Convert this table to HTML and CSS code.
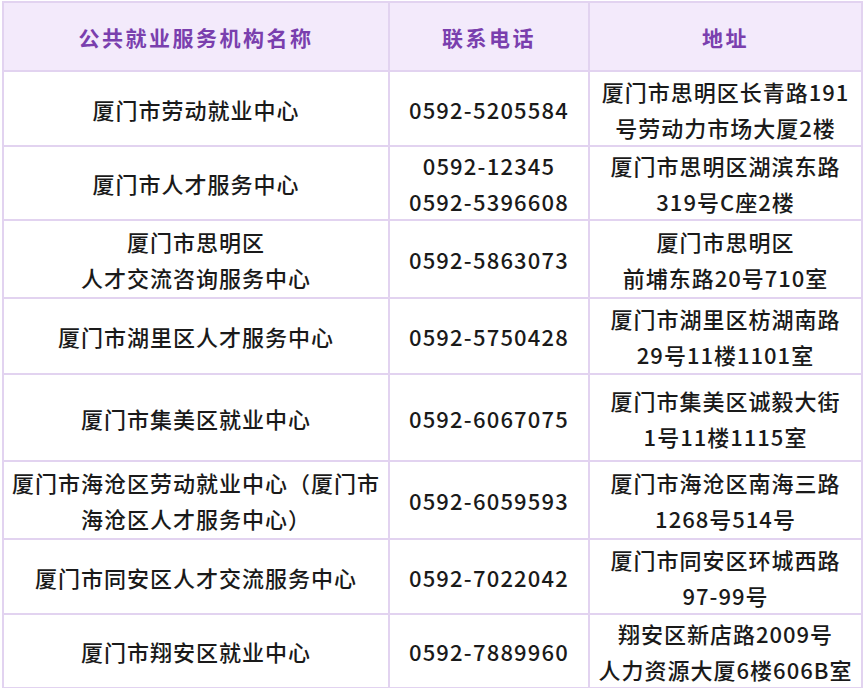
FILE: index.html
```html
<!DOCTYPE html>
<html lang="zh-CN">
<head>
<meta charset="utf-8">
<link rel="stylesheet" href="styles.css">
<title>厦门市公共就业服务机构</title>
</head>
<body>
<table class="svc">
  <colgroup>
    <col class="c-name">
    <col class="c-tel">
    <col class="c-addr">
  </colgroup>
  <thead>
    <tr class="r-head">
      <th>公共就业服务机构名称</th>
      <th>联系电话</th>
      <th>地址</th>
    </tr>
  </thead>
  <tbody>
    <tr class="r1">
      <td>厦门市劳动就业中心</td>
      <td>0592-5205584</td>
      <td>厦门市思明区长青路191<br>号劳动力市场大厦2楼</td>
    </tr>
    <tr class="r2">
      <td>厦门市人才服务中心</td>
      <td>0592-12345<br>0592-5396608</td>
      <td>厦门市思明区湖滨东路<br>319号C座2楼</td>
    </tr>
    <tr class="r3">
      <td>厦门市思明区<br>人才交流咨询服务中心</td>
      <td>0592-5863073</td>
      <td>厦门市思明区<br>前埔东路20号710室</td>
    </tr>
    <tr class="r4">
      <td>厦门市湖里区人才服务中心</td>
      <td>0592-5750428</td>
      <td>厦门市湖里区枋湖南路<br>29号11楼1101室</td>
    </tr>
    <tr class="r5">
      <td>厦门市集美区就业中心</td>
      <td>0592-6067075</td>
      <td>厦门市集美区诚毅大街<br>1号11楼1115室</td>
    </tr>
    <tr class="r6">
      <td>厦门市海沧区劳动就业中心（厦门市<br>海沧区人才服务中心）</td>
      <td>0592-6059593</td>
      <td>厦门市海沧区南海三路<br>1268号514号</td>
    </tr>
    <tr class="r7">
      <td>厦门市同安区人才交流服务中心</td>
      <td>0592-7022042</td>
      <td>厦门市同安区环城西路<br>97-99号</td>
    </tr>
    <tr class="r8">
      <td>厦门市翔安区就业中心</td>
      <td>0592-7889960</td>
      <td>翔安区新店路2009号<br>人力资源大厦6楼606B室</td>
    </tr>
  </tbody>
</table>
</body>
</html>
```

FILE: styles.css
```css
html, body {
  margin: 0;
  padding: 0;
  background: #ffffff;
}

body {
  padding: 1px 0 0 2px;
  font-family: "Noto Sans CJK SC", "Noto Sans", sans-serif;
  color: #1a1a1a;
}

.svc {
  border-collapse: collapse;
  table-layout: fixed;
  width: 859px;
  border: 2px solid #e2d3f0;
}

.c-name { width: 386px; }
.c-tel { width: 200px; }
.c-addr { width: 273px; }

.svc th,
.svc td {
  border: 2px solid #e2d3f0;
  text-align: center;
  vertical-align: middle;
  padding: 0 3px;
  font-size: 22px;
  font-weight: 500;
  line-height: 36px;
  letter-spacing: 1px;
  white-space: nowrap;
}

.svc th {
  background: #f3eafb;
  color: #7a3fae;
  font-size: 21px;
  font-weight: 700;
  letter-spacing: 2.5px;
}

.svc td:nth-child(2) {
  letter-spacing: 1.2px;
}

.r-head { height: 69px; }
.r1 { height: 75px; }
.r2 { height: 74px; }
.r3 { height: 78px; }
.r4 { height: 76px; }
.r5 { height: 87px; }
.r6 { height: 78px; }
.r7 { height: 75px; }
.r8 { height: 74px; }
```
